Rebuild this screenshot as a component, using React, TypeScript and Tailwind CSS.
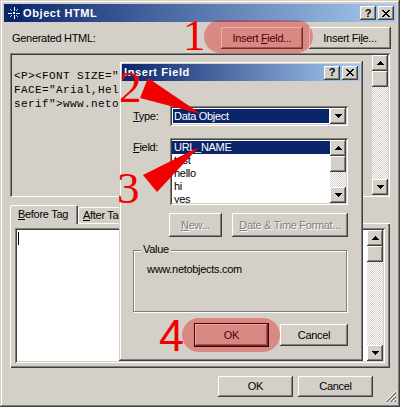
import type { ReactNode } from "react";

const raised =
  "shadow-[inset_-1px_-1px_0_#404040,inset_1px_1px_0_#ffffff,inset_-2px_-2px_0_#808080,inset_2px_2px_0_#D4D0C8]";
const sunken =
  "shadow-[inset_1px_1px_0_#808080,inset_-1px_-1px_0_#ffffff,inset_2px_2px_0_#404040,inset_-2px_-2px_0_#D4D0C8]";
const defBtn =
  "shadow-[inset_0_0_0_1px_#000000,inset_-2px_-2px_0_#404040,inset_2px_2px_0_#ffffff,inset_-3px_-3px_0_#808080]";
const disabledText = "text-[#808080] [text-shadow:1px_1px_0_#ffffff]";

function Arrow({ dir }: { dir: "up" | "down" }) {
  return (
    <svg width="7" height="4" viewBox="0 0 7 4" shapeRendering="crispEdges">
      <path
        d={dir === "up" ? "M3 0h1v1h1v1h1v1h1v1H0V3h1V2h1V1h1z" : "M0 0h7v1H6v1H5v1H4v1H3V3H2V2H1V1H0z"}
        fill="#000"
      />
    </svg>
  );
}

function ScrollButton({ dir }: { dir: "up" | "down" }) {
  return (
    <div className={`flex h-[16px] w-[16px] shrink-0 items-center justify-center bg-[#D4D0C8] ${raised}`}>
      <Arrow dir={dir} />
    </div>
  );
}

function ScrollBar() {
  return (
    <div className="flex h-full w-[16px] shrink-0 flex-col">
      <ScrollButton dir="up" />
      <div className={`h-[16px] w-[16px] shrink-0 bg-[#D4D0C8] ${raised}`} />
      <div className="flex-1 bg-[repeating-conic-gradient(#ffffff_0_25%,#D4D0C8_0_50%)] bg-[length:2px_2px]" />
      <ScrollButton dir="down" />
    </div>
  );
}

function Btn({
  children,
  className = "",
  isDefault = false,
}: {
  children: ReactNode;
  className?: string;
  isDefault?: boolean;
}) {
  return (
    <div className={`flex shrink-0 items-center justify-center bg-[#D4D0C8] ${isDefault ? defBtn : raised} ${className}`}>
      {children}
    </div>
  );
}

function CloseGlyph() {
  return (
    <svg width="8" height="7" viewBox="0 0 8 7" shapeRendering="crispEdges">
      <path
        d="M0 0h2v1h1v1h2V1h1V0h2v1H7v1H6v1H5v1h1v1h1v1h1v1H6V6H5V5H3v1H2v1H0V6h1V5h1V4h1V3H2V2H1V1H0z"
        fill="#000"
      />
    </svg>
  );
}

function CaptionButtons({ className = "" }: { className?: string }) {
  return (
    <div className={`ml-auto flex gap-[2px] ${className}`}>
      <div className={`flex h-[14px] w-[16px] items-center justify-center bg-[#D4D0C8] ${raised}`}>
        <span className="text-[11px] font-bold leading-none tracking-normal">?</span>
      </div>
      <div className={`flex h-[14px] w-[16px] items-center justify-center bg-[#D4D0C8] ${raised}`}>
        <CloseGlyph />
      </div>
    </div>
  );
}

function AppIcon() {
  return (
    <svg width="16" height="16" viewBox="0 0 16 16" className="shrink-0">
      <rect width="16" height="16" fill="#0A246A" />
      <g stroke="#ffffff" strokeWidth="1" shapeRendering="crispEdges">
        <path d="M8 2v4M8 10v4M2 8h4M10 8h4" />
        <path d="M4 4l2 2M12 4l-2 2M4 12l2-2M12 12l-2-2" stroke="#A6CAF0" />
      </g>
      <rect x="7" y="7" width="2" height="2" fill="#ffffff" />
    </svg>
  );
}

function Mn({ children }: { children: ReactNode }) {
  return <span className="underline underline-offset-[1px]">{children}</span>;
}

function InsertFieldDialog() {
  const items = ["URL_NAME", "test", "hello", "hi", "yes"];
  return (
    <div className="absolute left-[119px] top-[61px] z-20 flex h-[300px] w-[244px] flex-col bg-[#D4D0C8] p-[3px] shadow-[inset_-1px_-1px_0_#404040,inset_1px_1px_0_#D4D0C8,inset_-2px_-2px_0_#808080,inset_2px_2px_0_#ffffff]">
      <div className="flex h-[17px] shrink-0 items-center bg-[linear-gradient(to_right,#0A246A,#A6CAF0)] pl-[2px]">
        <span className="text-[11px] font-bold tracking-[0.6px] text-white">Insert Field</span>
        <CaptionButtons className="mr-[2px]" />
      </div>

      <div className="flex flex-col pl-[11px] pr-[12px]">
        <div className="mt-[25px] flex h-[20px] items-center">
          <span className="w-[37px] shrink-0">
            <Mn>T</Mn>ype:
          </span>
          <div className={`flex h-[20px] w-[178px] bg-white p-[2px] ${sunken}`}>
            <div className="m-[1px] flex flex-1 items-center bg-[#0A246A] pl-[1px] text-white">Data Object</div>
            <ScrollButton dir="down" />
          </div>
        </div>

        <div className="mt-[12px] flex items-start">
          <span className="mt-[3px] w-[37px] shrink-0">
            <Mn>F</Mn>ield:
          </span>
          <div className={`flex h-[67px] w-[178px] bg-white p-[2px] ${sunken}`}>
            <div className="flex-1 overflow-hidden pt-[1px] leading-[13px]">
              {items.map((item, i) => (
                <div key={item} className={`pl-[2px] ${i === 0 ? "bg-[#0A246A] text-white" : ""}`}>
                  {item}
                </div>
              ))}
            </div>
            <ScrollBar />
          </div>
        </div>

        <div className="mt-[8px] flex h-[24px]">
          <Btn className={`ml-[36px] h-[24px] w-[53px] ${disabledText}`}>
            <span>
              <Mn>N</Mn>ew...
            </span>
          </Btn>
          <Btn className={`ml-[10px] h-[24px] w-[116px] ${disabledText}`}>
            <span>
              <Mn>D</Mn>ate &amp; Time Format...
            </span>
          </Btn>
        </div>

        <div className="relative mt-[13px] h-[62px] w-[214px] border border-[#808080] shadow-[1px_1px_0_#ffffff,inset_1px_1px_0_#ffffff]">
          <span className="absolute -top-[8px] left-[7px] bg-[#D4D0C8] px-[2px]">Value</span>
          <div className="pl-[13px] pt-[12px] leading-[13px]">www.netobjects.com</div>
        </div>

        <div className="mt-[11px] flex items-start justify-end">
          <Btn isDefault className="h-[24px] w-[75px]">
            OK
          </Btn>
          <Btn className="ml-[11px] mt-[1px] h-[22px] w-[68px]">Cancel</Btn>
        </div>
      </div>
    </div>
  );
}

function Annotations() {
  return (
    <svg className="pointer-events-none absolute left-0 top-0 z-30" width="400" height="407" viewBox="0 0 400 407">
      <rect x="204" y="20" width="109" height="33" rx="16.5" fill="rgba(227,0,0,0.34)" />
      <rect x="182" y="318" width="98" height="34" rx="17" fill="rgba(227,0,0,0.34)" />
      <polygon points="148,78 140,98 201,114" fill="#F00000" />
      <polygon points="143,175 157,192 199,147" fill="#F00000" />
      <g fill="#F00000" fontSize="45" fontFamily="'Liberation Serif', 'Times New Roman', serif">
        <text x="183" y="50">1</text>
        <text x="119" y="102">2</text>
        <text x="117" y="203">3</text>
      </g>
      <text x="159" y="351" fill="#F00000" fontSize="45" fontFamily="'Liberation Sans', Arial, sans-serif">
        4
      </text>
    </svg>
  );
}

function SizeGrip() {
  return (
    <svg className="absolute bottom-[5px] right-[4px]" width="12" height="12" viewBox="0 0 12 12" shapeRendering="crispEdges">
      {[0, 4, 8].map((o) => (
        <g key={o}>
          <line x1={o + 1} y1="12" x2="12" y2={o + 1} stroke="#ffffff" />
          <line x1={o + 2} y1="12" x2="12" y2={o + 2} stroke="#808080" />
          <line x1={o + 3} y1="12" x2="12" y2={o + 3} stroke="#808080" />
        </g>
      ))}
    </svg>
  );
}

export default function App() {
  return (
    <div className="relative flex h-[407px] w-[400px] flex-col overflow-hidden bg-[#D4D0C8] p-[4px] font-['Liberation_Sans',Arial,sans-serif] text-[11px] leading-[13px] tracking-[-0.3px] text-black shadow-[inset_-1px_-1px_0_#404040,inset_1px_1px_0_#D4D0C8,inset_-2px_-2px_0_#808080,inset_2px_2px_0_#ffffff]">
      <div className="flex h-[18px] shrink-0 items-center bg-[linear-gradient(to_right,#0A246A,#A6CAF0)]">
        <div className="ml-[2px]">
          <AppIcon />
        </div>
        <span className="ml-[1px] text-[11px] font-bold tracking-[0.6px] text-white">Object HTML</span>
        <CaptionButtons className="mr-[2px]" />
      </div>

      <div className="mt-[5px] flex h-[22px] shrink-0 items-center pl-[8px] pr-[5px]">
        <span>Generated HTML:</span>
        <Btn className="ml-auto h-[22px] w-[82px]">
          <span>
            Insert <Mn>F</Mn>ield...
          </span>
        </Btn>
        <Btn className="ml-[6px] h-[22px] w-[82px]">
          <span>
            Insert Fi<Mn>l</Mn>e...
          </span>
        </Btn>
      </div>

      <div className={`ml-[6px] mt-[4px] flex h-[144px] w-[380px] shrink-0 p-[2px] ${sunken}`}>
        <div className="flex-1 overflow-hidden whitespace-pre pl-[2px] pt-[14px] font-['Liberation_Mono','Courier_New',monospace] text-[11px] leading-[14px] tracking-[0.4px]">
          {'<P><FONT SIZE="2"\nFACE="Arial,Helvetica,sans-\nserif">www.netobjects.com</FONT></P>'}
        </div>
        <ScrollBar />
      </div>

      <div className="relative z-10 ml-[6px] mt-[8px] flex h-[18px] shrink-0 items-end">
        <div className="-mb-[1px] flex h-[19px] w-[68px] items-start rounded-t-[2px] bg-[#D4D0C8] pl-[8px] pt-[3px] shadow-[inset_1px_1px_0_#ffffff,inset_-1px_0_0_#404040,inset_-2px_0_0_#808080]">
          <span>
            <Mn>B</Mn>efore Tag
          </span>
        </div>
        <div className="flex h-[16px] w-[60px] items-start rounded-t-[2px] bg-[#D4D0C8] pl-[5px] pt-[2px] shadow-[inset_1px_1px_0_#ffffff,inset_-1px_0_0_#404040,inset_-2px_0_0_#808080]">
          <span>
            <Mn>A</Mn>fter Tag
          </span>
        </div>
      </div>
      <div className="ml-[6px] h-[145px] w-[380px] shrink-0 p-[5px] shadow-[inset_1px_1px_0_#ffffff,inset_-1px_-1px_0_#404040,inset_-2px_-2px_0_#808080]">
        <div className={`flex h-full w-full bg-white p-[2px] ${sunken}`}>
          <div className="flex-1 pl-[1px] pt-[2px]">
            <div className="h-[13px] w-[1px] bg-black" />
          </div>
          <ScrollBar />
        </div>
      </div>

      <div className="mt-[8px] flex h-[21px] shrink-0 justify-end gap-[5px] pr-[23px]">
        <Btn className="h-[21px] w-[75px]">OK</Btn>
        <Btn className="h-[21px] w-[75px]">Cancel</Btn>
      </div>

      <SizeGrip />
      <InsertFieldDialog />
      <Annotations />
    </div>
  );
}
